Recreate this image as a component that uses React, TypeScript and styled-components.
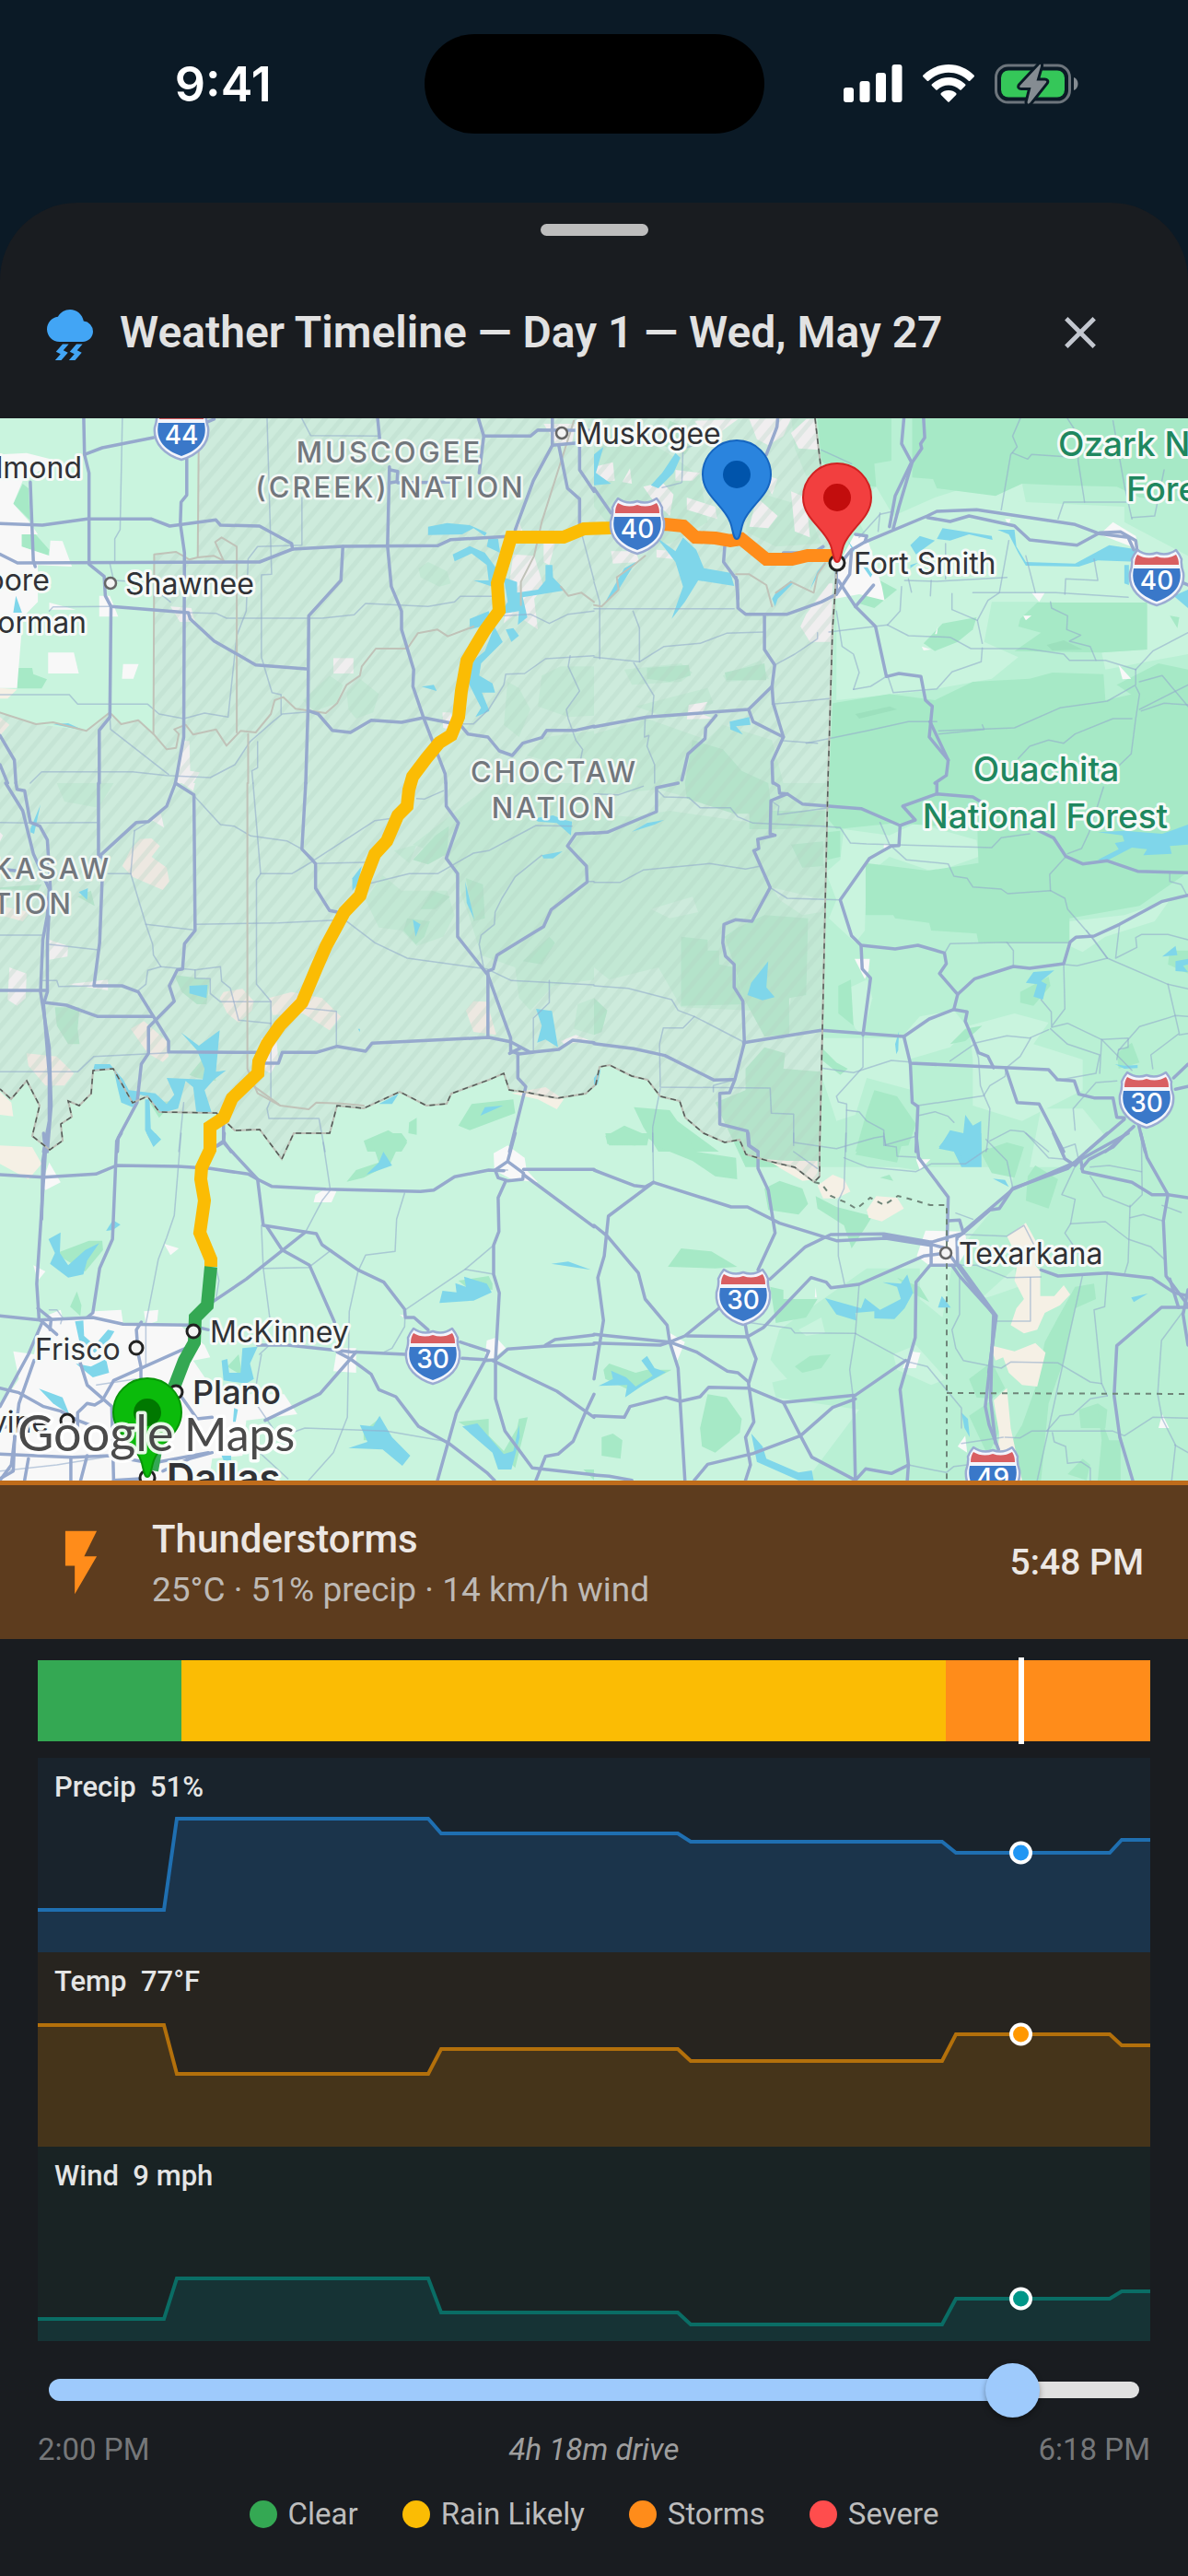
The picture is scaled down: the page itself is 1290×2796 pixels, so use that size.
import React, { useState } from "react";
import styled, { createGlobalStyle } from "styled-components";
import { MdThunderstorm, MdClose, MdFlashOn } from "react-icons/md";

const GlobalStyle = createGlobalStyle`
  * { box-sizing: border-box; }
  body { margin: 0; background: #191c20; }
`;

const Page = styled.div`
  min-height: 100vh;
  background: #0b1a26;
  font-family: Roboto, "Liberation Sans", sans-serif;
  display: flex;
  flex-direction: column;
`;

/* ---------- status bar ---------- */
const StatusBar = styled.header`
  display: grid;
  grid-template-columns: 1fr 369px 1fr;
  align-items: center;
  padding: 37px 0 75px;
`;
const Clock = styled.time`
  font: 600 52px/60px Inter, sans-serif;
  color: #fff;
  text-align: center;
  padding: 2px 0 0 24px;
`;
const Island = styled.div`
  height: 108px;
  border-radius: 54px;
  background: #000;
`;
const StatusIcons = styled.div`
  display: flex;
  justify-content: center;
  align-items: center;
  gap: 22px;
  padding-right: 31px;
  svg { display: block; }
`;

/* ---------- sheet ---------- */
const Sheet = styled.main`
  flex: 1;
  background: #191c20;
  border-radius: 84px 84px 0 0;
  display: flex;
  flex-direction: column;
`;
const Handle = styled.div`
  width: 117px;
  height: 13px;
  border-radius: 7px;
  background: #bdbdbd;
  margin: 23px auto 12px;
`;
const TitleRow = styled.div`
  display: flex;
  align-items: center;
  height: 186px;
  padding: 0 88px 0 46px;
  gap: 24px;
`;
const Title = styled.h1`
  flex: 1;
  margin: 0;
  font-size: 48px;
  line-height: 60px;
  font-weight: 600;
  color: #e2e2e2;
  white-space: nowrap;
`;
const CloseButton = styled.button`
  display: flex;
  padding: 0;
  border: 0;
  background: none;
  color: #c3c7cf;
  cursor: pointer;
`;
const MapSvg = styled.svg`
  display: block;
  width: 100%;
  height: auto;
  background: #c9f4de;
  font-family: Inter, "Liberation Sans", sans-serif;
`;

const Banner = styled.section`
  display: flex;
  align-items: center;
  gap: 36px;
  height: 172px;
  padding: 0 48px 0 47px;
  background: #5d3c1e;
  border-top: 5px solid #bf6c1b;
`;
const BannerText = styled.div`
  flex: 1;
`;
const Condition = styled.h2`
  margin: 0;
  font-size: 42px;
  line-height: 60px;
  font-weight: 500;
  color: #ece7e3;
`;
const Details = styled.p`
  margin: 0;
  font-size: 37px;
  line-height: 50px;
  color: #bdb9b5;
`;
const BannerTime = styled.time`
  font-size: 39px;
  line-height: 50px;
  font-weight: 500;
  color: #ece7e3;
`;

/* ---------- timeline ---------- */
const Timeline = styled.section`
  padding: 23px 41px 47px;
  display: flex;
  flex-direction: column;
`;
const Strip = styled.div`
  position: relative;
  display: flex;
  height: 88px;
  margin-bottom: 18px;
`;
const Segment = styled.div<{ $grow: number; $color: string }>`
  flex: ${(p) => p.$grow} 1 0;
  background: ${(p) => p.$color};
`;
const Cursor = styled.div`
  position: absolute;
  top: -3px;
  bottom: -3px;
  width: 6px;
  margin-left: -3px;
  background: #fff;
`;
const Lane = styled.div<{ $bg: string }>`
  position: relative;
  background: ${(p) => p.$bg};
  svg { display: block; width: 100%; height: auto; }
`;
const LaneLabel = styled.div`
  position: absolute;
  left: 18px;
  top: 12px;
  font-size: 31px;
  line-height: 40px;
  font-weight: 500;
  color: #e4e5e5;
  white-space: pre;
`;
const SliderBox = styled.label`
  position: relative;
  display: flex;
  align-items: center;
  height: 90px;
  margin-top: 8px;
  padding: 0 12px;
`;
const Played = styled.span`
  height: 24px;
  border-radius: 12px 0 0 12px;
  background: #9ecafc;
`;
const Remaining = styled.span`
  flex: 1;
  height: 18px;
  border-radius: 0 9px 9px 0;
  background: #e0e0e0;
`;
const Range = styled.input`
  position: absolute;
  left: -18px;
  width: calc(100% + 36px);
  height: 60px;
  margin: 0;
  appearance: none;
  background: transparent;
  cursor: pointer;
  &::-webkit-slider-thumb {
    appearance: none;
    width: 59px;
    height: 59px;
    border-radius: 50%;
    background: #9ecafc;
    box-shadow: 0 3px 6px rgba(0, 0, 0, 0.35);
  }
`;
const Times = styled.div`
  display: flex;
  justify-content: space-between;
  font-size: 33px;
  line-height: 40px;
  color: #757779;
  em { color: #9e9e9e; }
`;
const Legend = styled.ul`
  display: flex;
  justify-content: center;
  gap: 48px;
  margin: 30px 0 0;
  padding: 0;
  list-style: none;
  font-size: 33px;
  line-height: 40px;
  color: #bdbdbd;
`;
const LegendItem = styled.li`
  display: flex;
  align-items: center;
  gap: 12px;
`;
const Dot = styled.span<{ $color: string }>`
  width: 30px;
  height: 30px;
  border-radius: 50%;
  background: ${(p) => p.$color};
`;

/* ---------- map data: six tiles, each 1568 x 1200 units over 645 x 400 ---------- */
type Tile = {
  x: number; y: number;
  mid?: string[]; dark?: string[]; light?: string[]; deep?: string[]; sand?: string[]; town?: string[];
  water?: string[]; minor?: string[]; major?: string[]; tan?: string[];
};

const tiles: Tile[] = [
  {
    x: 0, y: 450,
    dark: ["45,825 85,825 88,845 124,862 110,892 45,892", "57,390 90,385 130,440 128,458 57,430", "35,290 60,225 75,240 80,345"],
    mid: ["800,930 870,850 905,880 890,940 830,965", "915,905 950,860 1000,910 985,970 940,990 920,960", "1105,500 1130,480 1180,510 1190,550 1160,560 1110,530", "1340,870 1370,890 1400,960 1370,1050 1330,1010", "1430,850 1480,820 1568,820 1568,980 1500,985 1420,950", "1390,1110 1440,1050 1568,1030 1568,1150 1450,1130", "925,180 990,150 1020,180 960,205"],
    town: ["0,130 70,125 150,150 60,215 35,290 75,345 100,390 57,390 57,430 130,460 133,410 165,412 190,495 100,490 100,610 60,660 45,890 0,890", "127,775 195,775 208,843 127,843", "325,812 366,812 352,860 322,860", "880,793 933,793 933,843 880,843", "262,590 290,590 312,658 262,658", "450,625 505,630 515,675 475,675", "1355,455 1410,460 1435,560 1410,600 1420,700 1360,650 1330,680", "1435,30 1520,30 1510,90 1470,100", "1435,420 1465,420 1450,490 1435,480", "1168,970 1190,970 1200,1030 1170,1020", "480,1063 500,1063 502,1160 527,1165 510,1200 460,1200", "1370,350 1380,380 1365,380", "130,612 200,635 130,635"],
    sand: ["0,890 45,895 20,925 0,925", "0,985 25,1010 0,1045"],
    water: ["1130,365 1180,353 1240,360 1285,385 1280,395 1250,370 1220,390 1130,392", "1195,455 1240,428 1280,450 1310,500 1300,560 1250,540 1290,540 1285,490 1245,452 1200,478", "1290,400 1315,405 1320,450 1285,430", "1330,530 1365,545 1365,580 1420,570 1440,540 1440,490 1458,490 1460,530 1492,572 1380,595 1392,660 1367,685 1370,640 1320,650 1340,610", "1240,665 1290,640 1300,680 1240,700", "1335,700 1355,695 1370,720 1350,740", "1305,690 1327,740 1270,810 1265,850 1300,875 1307,905 1272,905 1292,965 1255,985 1270,955 1235,870 1250,800 1280,770", "1113,886 1145,880 1153,900", "42,590 58,645 35,645", "140,1008 180,1005 225,1030"],
    tan: ["525,13 522,465 500,472 465,447 407,455 405,1040 440,1090 465,1085 472,1040 460,1025 490,1010 510,1042 570,1025 598,1078 635,1030 675,1035 715,975 725,930 748,920 780,958 860,972 890,940 915,880 950,850 955,820 992,762 1075,762 1103,712 1155,700 1182,722 1250,690", "590,475 568,415 585,400 625,430 625,1035", "522,465 565,460 590,475", "0,970 95,1008 140,1002 228,1030 290,970 320,1008 365,995 405,1040", "655,1040 655,1200", "1515,20 1430,350 1410,460 1375,545 1375,620", "1480,560 1500,590 1535,580 1568,610"],
    minor: ["323,13 317,375 303,405 303,480", "705,13 717,520 690,522 690,790 718,905 742,912 742,975", "797,13 820,68 1000,70", "797,270 797,425 680,430 655,470 650,640 625,720 602,985 540,972 485,990 420,975 390,943 205,943 183,912 0,912", "130,640 140,626 290,625", "500,645 570,647 598,663 850,663 935,652 965,615 1130,625 1200,610 1215,592 1300,592", "1568,640 1500,650 1450,680 1400,650 1330,655", "1568,785 1440,795 1385,843 1335,845 1330,880 1290,960 1250,1007 1200,1007", "1505,785 1500,820 1530,900 1495,960 1500,990 1520,1060 1538,1090 1530,1140", "290,985 292,1025 445,1172", "80,1200 110,1163 350,1163 440,1175 555,1182 620,1140 660,1065 720,1000 745,975 815,968", "290,485 300,540 345,543", "450,610 420,580", "1537,395 1568,540", "680,1065 680,1150 665,1160 668,1200"],
    major: ["221,13 223,130 235,190 235,487 275,527 278,590 293,625 290,985 262,1028 262,1200", "223,130 270,108 405,75", "545,25 565,15", "80,220 88,475 93,495", "0,355 112,360 230,340 400,340 448,363 570,343 582,360 685,363 770,420 772,438 685,480 46,483 0,455", "772,438 905,429 1155,427 1190,407 1340,397", "493,145 493,262 478,285 476,355 487,450 485,1050 463,1200", "293,625 497,645 502,665 565,737 675,815 808,828", "905,430 900,540 815,655 813,960 807,1200", "815,965 840,975 877,1028 925,1035 980,995 1060,1002 1118,987 1215,1010 1235,1040 1288,1050 1318,1095 1352,1110 1380,1070 1430,1052 1443,1028 1520,1028 1568,1015", "997,13 1003,90", "1028,170 1023,428 1033,560 1060,640 1060,700 1092,830 1090,885 1118,987 1175,1170 1177,1200", "1263,13 1277,70 1265,190", "1277,70 1400,70 1420,50 1568,52", "1458,13 1458,100 1408,215 1360,375", "1475,100 1498,240 1530,275 1530,360", "1530,60 1530,180 1568,250", "1458,100 1525,92", "0,1045 38,1125 42,1200", "0,1140 20,1200", "1030,180 1050,185 1048,218 1030,222", "1050,222 1190,220"],
  },
  {
    x: 645, y: 450,
    mid: ["583,13 1568,13 1568,1200 618,1200 640,480", "0,60 80,40 200,130 280,200 300,350 200,420 80,420 0,300", "420,250 560,300 600,420 480,430 400,380", "80,830 230,810 260,840 230,870 100,880", "340,850 440,800 462,860 350,870", "110,950 300,890 315,940 200,990", "0,1040 140,990 300,1060 300,1200 0,1200", "520,0 583,20 600,190 560,200 530,110", "340,1010 470,1060 500,1200 320,1200 280,1080"],
    light: ["745,235 790,330 900,270 1000,230 1130,225 1140,285 1400,300 1400,350 1568,460 1568,780 1350,830 1340,775 1460,765 1460,620 1170,610 1050,610 1030,740 1120,790 1050,860 870,900 640,930 640,480 720,400 680,300", "1065,270 1130,240 1130,285"],
    dark: ["590,13 785,13 785,150 740,160 745,235 680,230 600,150", "840,13 1568,13 1568,285 1440,270 1380,235 1230,230 1130,225 1060,265 905,240 895,210 840,205", "1170,612 1460,612 1460,765 1340,775 1110,770 1180,710 1120,690 1125,665", "630,940 780,910 900,930 1000,870 1150,860 1210,840 1345,845 1350,930 1568,870 1568,1200 620,1200", "870,745 920,680 1010,660 1000,700 960,740 900,770", "740,530 800,570 740,630 700,615", "1380,880 1490,810 1568,830 1568,900 1440,930", "1520,655 1545,660 1540,695", "200,20 280,60 240,130 180,100", "140,825 250,815 255,850 200,870 140,860", "345,840 450,810 455,865 350,865", "260,1060 340,1090 390,1160 460,1200 240,1200"],
    deep: ["1195,750 1240,735 1290,765 1210,768", "690,975 780,950 800,960 700,990"],
    town: ["410,15 520,13 500,70 460,100 430,80", "520,60 560,15 583,15 595,115 540,110", "0,170 50,155 55,215 5,220", "75,220 95,175 100,225", "130,235 180,220 210,260 200,330 150,270", "245,270 320,300 325,340 245,310", "430,270 485,330 460,370 410,365", "520,250 560,270 570,400 530,380", "45,445 110,445 120,480 50,485", "165,440 215,445 210,470 165,465", "690,385 720,395 760,560 767,605 700,585 635,600 640,500", "560,650 620,550 630,550 625,740 570,740 545,690", "250,945 300,935 285,975 315,990 245,992", "1335,390 1370,350 1430,395 1440,440", "1155,580 1190,580 1175,610", "1385,815 1418,860 1395,862", "1133,655 1155,655 1140,670", "1085,340 1100,340 1095,360", "265,20 380,15 330,60 280,45", "215,180 280,190 260,215 215,215", "435,190 485,210 470,260", "865,755 890,765 870,768", "900,715 908,690 905,715"],
    water: ["0,130 25,105 5,190 45,225 0,230", "150,230 180,190 215,125 228,140 210,190 170,240", "165,400 215,445 235,400 270,440 290,500 360,515 370,558 275,540 240,610 205,665 235,560 215,480", "480,580 520,540 525,550 485,600 478,625 470,600", "570,570 610,480 590,510", "30,610 80,500 110,480 60,580", "835,425 860,395 900,410 850,455", "905,405 920,370 1050,395 1052,408 990,390 940,410", "1065,375 1110,375 1115,430 1140,480 1270,485 1360,425 1440,440 1450,480 1330,475 1280,495 1140,492 1120,450 1095,390", "1400,490 1412,490 1412,555 1400,550", "1530,590 1568,570 1568,630", "358,1000 410,985 413,1010 375,1015 393,1042 360,1025", "835,490 855,482 835,500", "670,410 700,460 735,520 730,530 690,460"],
    tan: ["0,620 20,625 65,570 60,530 100,495 135,460", "375,520 410,520 455,555 470,625", "480,580 520,545 580,580 590,520 610,485"],
    minor: ["0,545 15,610 15,795", "0,632 370,632", "103,640 120,695 120,805 0,790", "120,805 185,755 280,745 350,712 450,708", "105,808 158,915 153,985", "135,990 133,1050 145,1045 140,1080 160,1140 160,1200", "478,815 530,780 590,730 590,710", "470,943 540,935 620,925", "620,708 775,685 830,720 940,725 995,762 1140,762 1240,780 1255,800 1350,800 1430,830", "640,640 655,755 685,780 700,840 685,895", "685,895 730,885 775,850 790,905 905,893 945,838 1022,805 1025,760", "775,685 808,640 812,560", "1000,580 1220,580 1410,595", "945,583 945,635 1012,670 1025,745", "1012,670 1040,605 1070,580 1095,410", "830,535 838,578", "890,540 888,590", "928,420 928,535", "820,540 905,543 1090,530", "1125,13 1105,70 1117,105 1100,130 1075,310", "1105,125 1145,145 1155,130 1255,138", "1250,13 1280,70 1278,150 1295,285", "1370,20 1400,230 1420,340", "1505,180 1480,330 1420,335", "1205,610 1208,630 1250,655 1248,700 1285,718 1255,738 1310,755 1325,800", "1243,585 1245,535 1330,540 1320,470", "1430,830 1475,770 1568,710", "1430,830 1430,880 1355,933 1230,955 1110,1020 910,1030", "1430,885 1440,910 1430,990 1418,1105 1380,1150", "1440,960 1568,880", "560,1070 720,1030 830,1000 905,1000", "910,1040 1030,1025 1025,1010", "500,1062 590,1070", "600,115 680,160", "755,320 750,380", "700,400 755,325 790,315", "1568,945 1505,940 1445,965", "1120,1120 1150,1080 1200,1060 1240,1070 1270,1040 1370,990 1420,990", "1225,340 1240,285 1410,285", "1440,870 1500,850 1568,950", "1140,460 1165,580", "232,220 235,110 265,100 290,60", "180,238 230,222"],
    major: ["0,240 45,320", "345,430 342,480 378,540 380,630 400,650 510,650 600,610 640,585", "375,530 380,600", "450,655 450,765 477,815 470,885 473,940 500,1050 470,1130 472,1200", "470,885 408,960 140,985 0,1017", "408,960 420,1000 500,1050", "322,980 295,1020 293,1055 248,1105 232,1190", "485,13 483,40 455,130", "870,13 873,75 862,95 865,110 840,155 805,300 790,370", "818,13 812,95 838,155 795,265 780,365", "640,580 640,500 680,440 715,415 880,330 905,315 1010,310 1270,358 1335,388 1410,400 1425,440", "880,335 940,348 990,330 1110,362 1150,408 1275,425 1335,385 1390,382 1430,410 1435,450", "715,415 720,395 690,390", "640,585 675,520 680,440", "645,540 690,625 743,690 772,853 805,843 863,853 875,930 893,950 885,1050 935,1125 930,1175 900,1200", "690,625 738,555", "887,1000 935,1125", "605,430 580,450 500,450", "1555,548 1568,555"],
  },
  {
    x: 0, y: 850,
    mid: ["1090,200 1300,0 1568,0 1568,640 1460,660 1400,740 1370,700 1360,600 1270,560 1240,440 1200,300 1180,240", "965,380 1010,300 1060,350 1180,350 1200,430 1170,500 1100,530 1060,480 1000,470", "1525,720 1568,700 1568,820 1515,800", "150,0 300,0 260,80 170,60", "1040,220 1100,200 1080,260"],
    dark: ["1090,250 1150,170 1185,140 1180,230 1130,265", "1110,410 1140,350 1188,370 1150,410", "1065,480 1075,440 1135,450 1120,500 1098,525", "1230,310 1275,330 1280,440 1250,450", "1380,580 1450,500 1465,520 1430,590", "460,625 555,640 545,720 520,720 480,680", "145,730 210,730 205,800 210,850 180,850 150,790", "1210,1115 1245,1045 1355,1030 1360,1075 1240,1130", "960,1165 1025,1130 1075,1170 1060,1200 970,1200", "1080,1105 1100,1090 1100,1145 1078,1140", "395,1040 460,1035 420,1090", "500,950 560,860 570,970 520,960", "0,340 110,330 100,350 0,345", "205,370 240,350 250,400"],
    town: ["130,510 180,530 178,565 130,575", "25,600 70,620 68,700 45,725 20,705", "180,655 285,640 285,675", "690,830 730,840 735,900 715,945 690,930", "480,0 515,0 510,25", "400,120 425,100 433,145", "1480,840 1520,820 1560,840 1490,850", "0,160 8,170 0,190"],
    sand: ["345,215 370,182 400,180 422,205 400,240 440,275 447,320 430,348 350,305 323,270", "590,680 640,670 670,710 665,740 630,780 600,750 580,700", "710,700 770,680 850,700 900,760 870,805 800,750 720,755", "1230,740 1250,710 1285,712 1310,820 1250,810", "345,800 380,775 440,840 445,890 430,908 390,880", "70,880 150,890 195,945 170,985 120,985 75,920", "0,1005 30,1040 35,1085 0,1080", "1350,1010 1440,990 1488,1030 1470,1062 1420,1030", "0,400 80,420 60,450 0,430"],
    water: ["478,812 525,855 580,805 570,940 597,935 565,965 540,1000 560,1078 518,1070 510,990 490,970 470,1060 425,1075 410,1050 390,1020 370,1015 350,1055 320,1040 310,990 300,930 245,940 250,915 290,915 325,965 340,1000 410,1010 440,1045 460,1015 440,960 535,965 540,930 520,870", "383,1030 395,1030 398,1125 425,1160 405,1185 383,1130", "500,660 548,657 545,700 500,685", "208,355 232,342 230,380", "1415,735 1457,742 1473,860 1440,835 1418,845 1430,790", "1090,445 1110,460 1097,500", "1228,320 1238,370 1252,445 1232,390", "930,310 955,270 945,330 930,350", "80,150 107,70 90,165 80,160", "1410,115 1460,105 1490,120 1510,125 1507,170 1470,130 1420,125", "1430,235 1485,222 1460,245 1435,245", "1268,1083 1280,1055 1328,1050", "1000,1045 1053,1010 1035,1045", "945,800 950,800 950,810"],
    tan: ["653,0 653,930 680,1010 740,1050 815,1062 835,1040 900,1043 960,1050", "668,985 735,1045"],
    minor: ["0,128 75,130 255,128", "355,155 345,295 385,460 403,525 405,560 425,598 515,608 582,598 585,645 608,668 630,772 715,782", "355,155 400,120", "425,598 390,610 385,655 365,675", "515,608 515,635 555,637 555,685 582,712 715,712", "515,45 582,135 618,140 662,172 757,188 797,215 830,250 990,122 1035,115", "668,0 688,295 770,295 825,255", "688,295 677,315 677,655 715,710 715,1030 705,1060 710,1092 842,1092 858,1200", "830,262 965,258", "515,460 735,455 885,446", "385,460 510,478", "910,445 990,520 1075,570 1285,605 1350,643 1568,657", "975,327 1080,295 1155,295 1250,228 1290,220 1415,138 1510,140", "1430,235 1360,305 1325,375 1307,420 1305,460 1270,495 1265,525 1278,610", "1450,643 1450,715 1408,765 1408,870", "805,733 888,743 888,855", "0,495 110,495", "130,525 260,543", "110,643 150,643 155,662 250,660", "285,295 345,295", "0,940 205,940 248,890 445,878", "485,1040 472,1200", "1100,50 1120,52 1170,25", "1550,320 1568,320"],
    major: ["260,0 260,235 272,245 263,520 248,660 322,660 365,680 445,840 445,875 680,877", "265,235 360,128 392,125 440,75 463,0 512,38 515,480 487,523 482,605 468,608 447,660 460,710 392,795 392,880 373,915 362,1040 312,1155 310,1200", "15,0 60,90 88,230 130,345 125,430 113,510 107,680 130,860 135,1050 125,1200", "42,0 45,20 65,25 80,128 105,140 125,185 133,345 125,520 125,680 115,720 130,950 130,1100 115,1200", "0,675 125,675", "120,715 175,723 258,760 405,760", "680,912 735,912 745,877 835,877 890,857 965,873 982,847 1290,828 1348,842 1400,877 1475,867 1512,837 1568,845", "807,0 797,215 833,262 833,342 870,415 890,420", "1177,0 1178,75 1210,130 1178,245 1208,295 1208,500 1288,625 1348,830 1348,872 1370,882 1405,877", "1288,825 1288,612 1302,605 1312,560 1435,467 1455,412 1550,322 1548,270 1498,205 1520,165 1568,162", "1367,880 1367,960 1388,988 1345,1200", "590,1100 590,1165 573,1180", "590,1165 610,1200", "0,280 40,285", "1345,880 1375,862"],
  },
  {
    x: 645, y: 850,
    mid: ["618,0 1568,0 1568,1250 595,1250", "0,0 618,0 603,800 500,830 520,700 410,740 230,730 170,600 40,640 0,600", "0,700 35,740 20,810 0,820"],
    dark: ["620,0 1568,0 1568,290 1440,400 1255,440 1255,520 1015,520 1010,490 890,480 885,455 795,440 790,430 717,430 717,260 880,285 1015,260 1012,150 800,130 640,150 620,120", "615,160 650,155 650,240 615,250", "230,500 300,510 300,545 330,545 330,590 370,600 400,720 230,725", "380,470 450,430 565,440 560,690 515,700 515,820 450,825 395,700 370,590 345,500", "400,930 450,860 505,880 500,930 600,940 595,1250 400,1250 320,1040 400,1000", "645,660 678,640 685,790 645,750", "600,860 640,910 670,930 650,950 600,900", "1125,680 1200,630 1205,660 1160,725 1125,715", "720,1070 740,1000 800,1020 850,1110 830,1180 690,1200", "240,0 460,0 470,100 370,100 270,60 245,50", "410,90 610,90 608,140 500,150 410,150", "520,200 605,190 605,270 550,275", "105,1055 200,1065 220,1100 330,1200 170,1200 130,1120", "30,1150 80,1115 145,1150 140,1180 40,1180", "1520,545 1568,545 1568,620 1515,590", "940,850 980,800 1025,790 980,840", "1380,880 1420,845 1440,910 1385,930", "0,700 35,740 20,810 0,820"],
    light: ["660,150 780,170 850,130 1010,185 1015,240 900,290 780,240 720,300 716,430 715,480 690,520 620,440 640,380 612,290 650,250", "600,830 720,830 810,830 860,760 950,740 990,800 940,860 830,900 840,1000 720,960 690,1080 640,1100 600,950", "650,680 720,640 735,700 710,820 690,800", "470,340 610,380 600,420 550,430 490,380", "150,410 260,370 275,420 200,440", "1255,450 1400,430 1520,380 1480,450 1350,500 1290,550 1255,530", "990,790 1110,750 1200,780 1160,850 1290,900 1290,1000 1130,1100 1000,1050 1000,900", "170,20 410,100 420,130 200,90 100,110 0,100 0,40", "170,790 340,780 390,850 330,950 180,900", "1180,1060 1290,1060 1350,1150 1250,1250 1150,1250"],
    town: ["688,572 728,572 725,610 715,638", "765,197 785,205 765,222"],
    water: ["460,580 455,665 477,697 445,707 405,690 415,650", "100,158 140,130 185,120 160,135", "1330,250 1385,215 1375,195 1400,190 1395,170 1330,160 1400,155 1500,165 1568,135 1568,200 1520,205 1525,230 1450,235 1460,215 1420,210 1350,255", "1500,565 1535,530 1540,560", "1535,580 1568,572 1568,590 1555,595 1568,615 1535,612", "1140,650 1160,615 1215,610 1180,645 1195,655 1185,705 1160,695 1170,655", "795,850 805,808 803,870 798,883", "1375,915 1400,920 1435,918 1435,928 1400,930", "910,1190 940,1130 975,1140 980,1080 1000,1115 1022,1100 1023,1250 970,1250 950,1200", "0,960 18,930 10,980 0,990"],
    minor: ["0,323 70,323 130,283 305,262 400,280 440,270", "0,35 65,38 130,10", "165,20 185,45 250,47 280,80 360,80 380,110 420,130 600,140 650,145 677,195 720,198 1050,210 1075,178 1150,165", "470,60 488,75 485,103 545,93 620,80", "465,340 510,375 650,380", "755,128 780,200 825,250 935,263 950,303 985,310 1000,338 1075,345 1092,360 1205,350 1243,375 1250,410 1320,510 1355,570 1515,655 1568,670", "1245,240 1203,297 1205,350", "1250,230 1287,213 1307,160 1345,13", "925,555 940,523 1090,518 1107,545 1107,597", "1090,520 1255,520", "1240,590 1275,595 1355,570", "1240,590 1243,735 1208,792 1207,745 1180,705", "1355,570 1300,480", "1387,465 1377,570 1433,535 1430,503 1445,493 1515,493 1568,510", "1515,655 1545,815 1470,885 1475,930", "1205,800 1250,850 1335,885 1325,945 1220,968", "1208,795 1250,782 1340,835 1410,830 1410,860 1385,867 1380,900", "1335,945 1340,835 1420,935", "1385,870 1440,793 1535,757 1568,760", "940,905 1010,845 1090,823 1150,830 1200,803", "1153,830 1125,890 1090,925", "1003,850 1015,895 1020,985 1030,1018 1045,1060 1040,1160 1035,1200", "1030,1015 1045,985 1085,955 1088,935", "0,660 90,668 205,705 222,740 265,760 395,843", "265,760 235,797 183,797 173,850 175,990 465,993 468,1075 527,1078 527,1180", "175,995 155,1120 155,1200", "600,928 685,943 785,903 835,908", "710,825 710,925 640,1020 645,1038 667,1045 665,1200", "855,1050 1030,1018", "855,1083 900,1070 935,1085 950,1105", "667,1065 700,1070 720,1100 765,1130 765,1180 850,1150", "315,1005 315,985 370,965", "1520,290 1520,320 1550,330 1565,365", "1568,815 1545,820", "1270,1130 1265,1060 1325,975 1380,970", "1045,1165 1100,1130 1135,1135 1200,1200"],
    major: ["222,0 165,15 165,93 35,160 0,163", "475,0 488,10 490,33 510,35 550,68 705,83 808,138 848,120 815,75 905,35 1000,45 1020,60", "905,0 905,35", "510,35 467,57 465,165 478,170 432,183 435,213 422,220 465,340 417,450 373,445 343,460 340,520 347,563 370,590 370,665 393,710 397,845 372,965 358,1008 332,1010 332,1110 405,1133 408,1180 432,1200", "808,138 805,203 785,205 727,245 650,380 680,497 705,528 795,540 855,528 925,553 930,588 912,620 960,688 950,737 885,768 818,825 600,805 395,845", "705,528 708,605 730,635 710,820", "960,688 1005,637 1107,597 1150,603 1240,588 1257,517 1272,502 1320,498 1387,460 1500,385 1568,365", "950,737 985,745 980,775 1015,878 1040,890 1055,927", "818,825 835,912 1200,933 1223,965 1268,970 1280,1013 1320,1025 1370,1025 1380,1088 1400,1090", "835,912 840,1040 855,1053 850,1200", "1088,933 1117,1040 1175,1045 1240,1200", "1165,150 1213,178 1245,238 1290,263 1355,253 1435,287 1568,292", "0,848 105,865 187,887 317,967 370,965", "1535,997 1568,988", "1530,960 1568,915", "1400,1095 1300,1200", "1425,1118 1370,1180 1350,1200", "1437,1110 1455,1200"],
  },
  {
    x: 0, y: 1230,
    dark: ["150,390 235,350 270,350 272,380 225,450 170,410", "185,565 203,515 215,560 212,595", "980,20 1010,0 1060,0 1075,25 1045,60 1030,100 960,145 915,158 940,120 1000,95", "960,970 1000,930 1010,1000 960,1000", "1210,940 1290,930 1290,985 1330,1035 1365,960 1370,930 1393,925 1360,1090 1290,1000", "1210,480 1290,465 1300,490 1300,510 1230,500", "600,760 630,720 640,790", "1540,1095 1568,1095 1568,1130"],
    sand: ["0,40 85,45 110,100 75,150 0,100"],
    town: ["1303,65 1340,40 1385,80 1390,120 1420,160 1350,150 1305,120", "833,200 860,180 888,190 875,225 828,225", "110,165 130,95 160,160 120,185", "433,360 472,375 450,397", "88,430 120,450 100,480", "380,580 418,575 415,612 385,625", "130,590 160,575 165,600 225,605 250,580 320,575 325,620 470,620 540,690 555,730 510,740 560,830 640,850 750,850 785,915 650,935 640,1050 560,1060 550,1140 0,1140 0,890 50,800 35,710 90,720 110,620", "890,700 940,700 940,780 880,775", "1285,675 1310,665 1335,700 1300,735 1280,730", "1055,590 1075,595 1070,605"],
    water: ["128,345 160,323 158,390 180,430 225,380 262,358 230,415 220,460 180,470 132,425 145,390", "280,318 298,283 318,298 298,315", "967,135 1000,95 1012,60 1035,105", "387,0 410,0 425,20 405,42", "1160,553 1168,513 1205,518 1202,488 1230,500 1225,467 1285,490 1298,518 1250,545", "1455,425 1500,418 1560,445 1480,430", "198,613 220,610 222,660 250,690 285,640 302,645 290,670 250,715 210,680", "200,750 240,760 280,735 288,780 245,795", "103,832 165,860 183,915 140,880", "585,740 600,735 605,780 635,780 640,700 680,695 660,750 670,800 650,815 590,805", "618,895 628,900 622,940 615,940", "950,950 985,955 1002,920 1035,990 1083,1050 1062,1083 1010,1030 920,1025 970,1005", "1220,955 1260,945 1330,1045 1355,1035 1370,950 1372,990 1350,1095 1315,1095 1300,1040", "585,1050 610,1050 610,1065 590,1065"],
    minor: ["478,0 460,268 440,340 418,410 385,620 385,760", "853,30 872,185 850,220 805,325", "1068,195 1047,280 1043,385 965,397 945,450 922,580 917,925 880,1040 815,1130", "690,300 695,440 712,600", "695,440 815,437 875,380", "1300,368 1228,443 1070,575 1068,630 1035,700 1015,712", "1228,443 1300,458", "570,440 578,480 570,540", "770,975 805,960 1020,970 1185,1005", "255,820 360,800", "130,575 150,575 165,600 160,620", "0,1100 150,1080 300,1050", "685,720 720,680", "690,720 680,790 670,870 720,960", "650,1000 760,1125", "1340,120 1300,120"],
    major: ["115,0 120,60 97,490 103,605", "125,0 113,90 110,280", "0,135 115,143 253,133 308,105 470,108 555,115 655,133 680,150 717,173 860,182 1110,190 1145,185 1200,142 1290,120 1330,122", "320,0 308,25 297,345 263,440 245,585 230,600", "592,0 590,30 680,150 695,300 835,327 850,363 945,445 1013,485 1068,573 1070,600 1093,600 1130,640", "590,30 573,42", "803,325 650,475 560,550", "705,305 745,380 817,430 883,615", "1360,0 1340,92 1307,120 1315,145 1340,155 1380,150 1382,130 1340,92", "1382,118 1568,118", "1382,135 1568,305", "1335,155 1315,210 1317,320 1303,365 1303,460 1318,520 1308,740", "0,595 105,608 245,600 325,622 500,625 550,640", "680,690 760,690 925,712 1070,720", "1215,680 1290,710 1280,740 1308,738 1340,703 1445,693 1568,687", "1220,733 1280,737", "1440,690 1465,672 1568,657", "1280,740 1205,910 1155,1130", "1300,740 1470,840 1568,925", "1308,740 1308,865 1333,970 1405,1090 1568,1112", "925,735 845,848 700,935", "925,735 980,785 1000,835 1045,858 1105,955 1185,1010 1285,1105 1305,1130", "940,712 925,735 890,712", "1568,850 1545,910 1513,1003 1473,1045 1440,1052 1415,1130", "103,605 150,655", "110,620 75,720 0,890", "90,740 50,880 30,1080 0,1130", "205,720 230,820 295,890 300,1130", "373,615 360,640 365,720 372,760 372,820", "490,700 300,805 270,870 250,885 230,880 205,910 205,960", "0,830 50,845 115,890 160,905 205,935 290,975", "0,1045 190,1055 290,1050 400,1075 550,1040", "187,1055 187,1130", "230,1050 213,1130", "75,1060 65,1130", "300,1130 370,1125", "480,860 520,930 560,925", "430,1100 500,1060 560,1040", "0,960 40,950 35,1100 0,1125", "100,570 135,605 132,640"],
  },
  {
    x: 645, y: 1230,
    mid: ["1130,0 1568,0 1568,1130 560,1130 700,900 480,860 460,760 490,640 720,440 860,440 860,540 920,600 950,400 1100,180", "610,0 900,0 920,100 850,120 700,90"],
    dark: ["125,0 240,0 270,60 375,80 378,150 320,140 260,90 180,50", "450,180 490,155 550,180 565,230 540,265 460,250", "585,205 640,240 735,270 715,310 680,375 660,300 590,245", "195,435 230,375 310,385 378,435 320,440", "465,500 500,510 500,540 590,540 560,600 480,618", "690,70 720,0 820,0 800,95", "1020,60 1090,30 1135,45 1110,145 1050,130", "1145,140 1165,105 1225,150 1200,245 1140,220", "1225,600 1270,500 1320,490 1325,540 1270,570 1240,740 1200,880 1180,1130 1095,1130 1085,1040 1130,950 1165,830 1190,680", "990,800 1050,745 1085,830 1050,865 1010,860", "1280,900 1330,880 1355,900 1350,960 1285,960", "280,960 300,850 350,860 390,930 385,975 320,1040 285,1020", "20,990 50,978 75,1000 70,1060 20,1050", "25,770 40,750 110,780 140,770 205,770 100,840 30,800", "530,760 570,725 625,720 600,765 550,780", "1250,1110 1290,1060 1310,1080 1300,1130", "1330,900 1360,1000 1390,1000 1390,1130 1330,1130 1340,1000", "990,920 1050,870 1070,970 1040,1050", "755,145 780,135 790,155", "30,0 120,0 110,40 35,35", "800,470 860,500 885,550 840,520"],
    light: ["540,640 600,600 610,650 560,660", "455,720 480,760 510,800 440,820", "790,720 850,690 930,800 890,820 800,770", "1020,540 1110,440 1120,500 1050,530"],
    sand: ["1090,335 1140,292 1170,360 1165,430 1178,450 1178,530 1215,530 1240,495 1257,525 1230,560 1190,585 1170,640 1135,652 1100,625 1115,570 1135,540 1110,480 1120,410", "1045,690 1110,710 1165,683 1192,715 1170,825 1130,820 1095,780 1080,730 1060,740", "1055,870 1090,830 1100,960 1130,1130 1060,1130 1070,980", "720,250 745,205 800,210 818,245 760,287 725,275", "590,170 630,135 660,150 677,190 640,212 605,212", "455,85 510,90 590,90 590,150 550,155 500,120"],
    town: ["875,317 980,320 985,380 960,430 890,435 852,400", "850,85 888,85 860,120", "200,650 240,680 220,740 205,700", "835,710 862,715 850,765 815,765", "960,1020 980,985 985,1040", "1490,960 1500,915 1518,960", "585,500 588,535 583,535"],
    water: ["762,485 810,490 827,460 842,520 820,570 793,605 740,603 740,580 690,585 692,610 640,590 610,537 705,570 715,537 755,575 810,540 800,500", "918,530 942,568 908,568", "910,45 940,0 1022,0 1023,60 975,93 960,45", "1053,148 1085,152 1095,175", "1418,535 1462,522 1425,550", "415,978 445,1020 455,1060 540,1105 575,1098 580,1130 540,1130 430,1070", "12,823 50,800 45,773 85,795 110,825 155,790 125,740 140,725 160,765 190,778 130,820 82,860 88,820", "970,910 987,930 992,990 978,960"],
    minor: ["155,0 157,160", "527,0 527,30 640,50 740,15 765,10 770,40 798,45 800,75 850,78", "665,0 660,180 645,220 645,400 662,495", "527,60 590,115", "660,80 720,110 850,125 890,100 980,100 1040,50", "765,0 770,40", "400,615 520,635 530,650 690,652 700,490", "690,652 830,745 880,760 970,895 970,960", "690,652 675,770 683,850", "965,470 965,590 945,640 955,700 975,740 1075,765 1100,745 1225,748 1310,810 1340,815 1355,855", "1152,470 1152,612 1060,612", "960,430 1010,430 1090,470 1180,468", "955,260 1000,280", "980,330 1090,335 1135,300 1160,360", "1290,460 1170,1130", "1355,455 1348,565 1320,575 1340,815", "1415,235 1410,420 1400,460", "1445,0 1447,200 1415,240 1345,205 1310,140", "1275,95 1235,200 1270,215 1258,295 1243,325 1290,410", "1258,295 1350,288 1410,345 1470,370 1505,410", "1415,275 1450,265 1500,285", "1310,110 1360,105 1445,125", "1085,990 1125,992 1155,970 1370,970 1400,985 1475,925 1568,928", "1195,970 1230,920 1265,915 1310,865 1355,855", "1210,975 1215,1005 1245,1020 1250,1075 1285,1070 1310,1090 1310,1130", "830,1080 930,1105 950,1085 985,1080", "1555,580 1498,675 1488,850 1500,930 1535,1015 1525,1130", "1533,1015 1568,1040", "1035,20 1090,90 1105,175", "1140,0 1200,80 1245,85", "1500,235 1550,258", "970,1010 1080,990", "1235,50 1270,35 1280,90"],
    major: ["407,0 410,40 433,60 433,115 460,185 478,325 433,445", "0,120 105,170 135,175 157,160 362,240 405,240 490,293 640,350 770,342 890,365", "157,160 38,270 27,400 10,470 25,610 0,800", "0,300 35,335 117,455 135,540 193,625 200,680 222,765 240,1130", "200,680 175,690 0,683", "200,680 0,655", "330,570 240,660 200,680 270,712 352,775 380,780 408,810", "245,660 405,663 447,633 573,470 613,485 625,503 700,492 870,400 930,390", "465,475 558,370 625,330 765,328 890,355 975,325", "765,335 890,362 930,375", "400,627 405,663 428,735 408,815 422,940 400,990 413,1080 400,1130", "0,920 80,925 95,890 190,860 228,873 280,858 303,827 408,830 500,877 690,853 823,740", "500,877 545,985 575,1055 690,1130", "265,1130 300,1078 420,1043 545,985 630,893 690,865", "685,855 690,1130 717,1093 785,1108 830,1080", "887,430 850,485 848,665 808,835 830,1080 827,1130", "850,0 857,80 935,208 932,350", "935,285 965,283 975,325", "890,355 890,430 960,430 958,340 975,325", "975,325 1045,250 1070,245 1105,180 1250,115 1355,0", "975,320 1030,262 1105,183 1270,95 1410,0", "1213,0 1243,83 1270,105 1285,85 1290,125 1420,160 1473,200 1515,200 1568,210", "1287,115 1307,85 1370,45 1405,0", "1443,0 1460,80 1515,200 1503,285 1510,465 1568,560", "945,430 965,465 1060,595 1033,890 1043,950 1068,1030", "930,380 1000,500 1055,590 1050,720 1047,870 1060,1010", "965,430 1062,595 1042,780", "1180,445 1225,465 1355,455 1473,472 1533,520 1568,530", "1520,475 1543,568", "1568,567 1498,567 1380,692 1373,855 1388,990 1422,1130", "1568,510 1555,590 1568,690", "0,1113 40,1117 100,1130"],
  },
];

const tileMatrix = (t: Tile) => `translate(${t.x} ${t.y}) scale(0.41135 0.33333)`;

type LayerProps = { kind: "mid" | "dark" | "light" | "deep" | "sand" | "town" | "water"; fill: string };
const FillLayer = ({ kind, fill }: LayerProps) => (
  <g fill={fill}>
    {tiles.map((t, i) => (
      <g key={i} transform={tileMatrix(t)}>
        {(t[kind] ?? []).map((p, j) => <polygon key={j} points={p} />)}
      </g>
    ))}
  </g>
);
const LineLayer = ({ kind, color, width }: { kind: "minor" | "major" | "tan"; color: string; width: number }) => (
  <g fill="none" stroke={color} strokeWidth={width} strokeLinejoin="round" strokeLinecap="round">
    {tiles.map((t, i) => (
      <g key={i} transform={tileMatrix(t)}>
        {(t[kind] ?? []).map((p, j) => <polyline key={j} points={p} vectorEffect="non-scaling-stroke" />)}
      </g>
    ))}
  </g>
);

const redRiver =
  "890,1277 884,1283 863,1267 834,1260 810,1253 803,1237 787,1240 764,1230 744,1213 738,1195 717,1190 703,1172 686,1168 662,1156 651,1158 647,1177 636,1187 605,1192 568,1185 553,1183 547,1165 531,1172 490,1187 485,1198 463,1200 434,1185 395,1203 366,1200 358,1230 319,1230 306,1258 282,1226 255,1227 235,1208 173,1207 160,1190 144,1197 123,1160 101,1162 99,1187 86,1200 74,1195 78,1212 66,1220 68,1238 54,1248 35,1233 43,1200 29,1173 12,1193 0,1182";
const nations =
  "216,454 885,454 892,513 909,610 904,683 899,850 893,1117 890,1250 " + redRiver +
  " 0,773 39,786 94,793 119,773 132,786 150,782 167,797 167,601 191,599 206,607 215,605";
const stateLine = "885,454 892,513 909,610 904,683 899,850 893,1117 890,1250 890,1277";

const yellowRoute =
  "692,571 662,573 634,574 612,583 555,583 547,610 540,633 542,663 526,685 507,717 501,750 498,778 490,798 477,806 463,823 448,843 444,857 442,875 432,885 420,913 407,927 397,953 391,972 374,990 354,1027 344,1050 328,1088 304,1113 290,1133 281,1152 280,1165 252,1192 243,1213 228,1223 228,1248 219,1267 218,1280 222,1303 217,1338 229,1367 229,1375";
const greenRoute = "229,1375 225,1417 212,1430 211,1457 200,1477 190,1503 177,1530 165,1596";
const orangeRoute = "692,571 723,569 742,571 755,583 777,584 793,587 805,585 832,607 860,607 877,603 904,603";

type LabelProps = { x: number; y: number; children: string; size?: number; weight?: number; anchor?: "start" | "middle" | "end"; color?: string };
const MapLabel = ({ x, y, children, size = 32, weight = 400, anchor = "start", color = "#303236" }: LabelProps) => (
  <text x={x} y={y} fontSize={size} fontWeight={weight} textAnchor={anchor} fill={color} stroke="#f6faf8" strokeWidth={6} strokeLinejoin="round" paintOrder="stroke">
    {children}
  </text>
);
const AreaText = styled.text`
  font-size: 31px;
  font-weight: 500;
  letter-spacing: 3px;
  fill: #72777d;
  stroke: #f2f8f5;
  stroke-width: 5px;
  stroke-linejoin: round;
  paint-order: stroke;
`;

const Town = ({ x, y, r = 6, dark = false }: { x: number; y: number; r?: number; dark?: boolean }) => (
  <circle cx={x} cy={y} r={r} fill="#f4f4f4" stroke={dark ? "#222" : "#666"} strokeWidth={dark ? 3 : 2.5} />
);

const Shield = ({ x, y, n }: { x: number; y: number; n: string }) => (
  <g transform={`translate(${x} ${y})`}>
    <path d="M-21 2 Q-11 9 0 5 Q11 9 21 2 Q25 7 27 12 Q26 18 29 27 C31 45 17 57 0 62 C-17 57 -31 45 -29 27 Q-26 18 -27 12 Q-25 7 -21 2Z" fill="#f3f5fb" stroke="#9aabd2" strokeWidth={2.5} strokeLinejoin="round" />
    <path d="M-25 22 C-29 42 -17 52 0 58 C17 52 29 42 25 22Z" fill="#3a78c9" />
    <path d="M-21 7 Q-11 13 0 9 Q11 13 21 7 Q24 11 24 18 L-24 18 Q-24 11 -21 7Z" fill="#d95f62" />
    <text x={0} y={45} fontSize={28} fontWeight={500} textAnchor="middle" fill="#fff">{n}</text>
  </g>
);

const Pin = ({ x, y, fill, edge, core }: { x: number; y: number; fill: string; edge: string; core: string }) => (
  <g transform={`translate(${x} ${y})`}>
    <path d="M0 0 C-4 0 -4 -10 -7 -18 C-14 -37 -37 -47 -37 -70 A37 37 0 0 1 37 -70 C37 -47 14 -37 7 -18 C4 -10 4 0 0 0Z" fill={fill} stroke={edge} strokeWidth={2} />
    <circle cx={0} cy={-70} r={15} fill={core} />
  </g>
);

const RouteMap = () => (
  <MapSvg viewBox="0 454 1290 1153" role="img" aria-label="Route from Dallas to Fort Smith">
    <defs>
      <pattern id="hatch" width="14" height="14" patternUnits="userSpaceOnUse" patternTransform="rotate(40)">
        <rect width="5" height="14" fill="#b5d5c6" opacity="0.3" />
      </pattern>
    </defs>
    <rect x="0" y="454" width="1290" height="1153" fill="#c9f4de" />
    <FillLayer kind="mid" fill="#b9f0d4" />
    <FillLayer kind="light" fill="#c9f4de" />
    <FillLayer kind="dark" fill="#a6e9c6" />
    <FillLayer kind="deep" fill="#9ce0bd" />
    <FillLayer kind="sand" fill="#f5f0e5" />
    <FillLayer kind="town" fill="#f8f8f8" />
    <polygon points={nations} fill="rgba(217,212,214,0.27)" />
    <polygon points={nations} fill="url(#hatch)" />
    <FillLayer kind="water" fill="#7fd6ea" />
    <LineLayer kind="minor" color="rgba(147,172,203,0.6)" width={1.5} />
    <LineLayer kind="tan" color="#c0c2b8" width={2} />
    <LineLayer kind="major" color="#96a9cd" width={3.5} />
    <g fill="none">
      <polyline points={stateLine} stroke="#b9b9b2" strokeWidth={2} />
      <polyline points={stateLine} stroke="#545c58" strokeWidth={1.5} strokeDasharray="6 5" />
      <polyline points={redRiver} stroke="#babdb4" strokeWidth={2} />
      <polyline points={redRiver} stroke="#545c58" strokeWidth={1.5} strokeDasharray="6 5" />
      <polyline points="884,1283 892,1285 902,1298 918,1305 930,1312 945,1300 960,1308 975,1298 990,1302 1010,1308 1028,1308 1028,1607" stroke="#6f8579" strokeWidth={2} strokeDasharray="6 6" />
      <polyline points="1028,1512 1290,1513" stroke="#6f8579" strokeWidth={2} strokeDasharray="6 6" />
    </g>
    <g fill="none" strokeWidth={14} strokeLinejoin="miter">
      <polyline points={orangeRoute} stroke="#ff8c1a" />
      <polyline points={yellowRoute} stroke="#fbbc04" />
      <polyline points={greenRoute} stroke="#34a853" />
    </g>

    <Town x={120} y={633} />
    <Town x={610} y={470} />
    <Town x={1027} y={1360} />
    <Town x={909} y={611} r={8} dark />
    <Town x={148} y={1463} r={7} dark />
    <Town x={210} y={1445} r={7} dark />
    <Town x={191} y={1511} r={7} dark />
    <Town x={73} y={1542} r={7} dark />
    <Town x={160} y={1604} r={8} dark />

    <MapLabel x={89} y={519} anchor="end">Edmond</MapLabel>
    <MapLabel x={54} y={641} anchor="end">Moore</MapLabel>
    <MapLabel x={94} y={687} anchor="end">Norman</MapLabel>
    <MapLabel x={136} y={645}>Shawnee</MapLabel>
    <MapLabel x={625} y={482}>Muskogee</MapLabel>
    <MapLabel x={927} y={623}>Fort Smith</MapLabel>
    <MapLabel x={1041} y={1372}>Texarkana</MapLabel>
    <MapLabel x={228} y={1457}>McKinney</MapLabel>
    <MapLabel x={38} y={1476}>Frisco</MapLabel>
    <MapLabel x={53} y={1555} anchor="end">Grapevine</MapLabel>
    <MapLabel x={209} y={1524} size={36} weight={500}>Plano</MapLabel>
    <MapLabel x={181} y={1619} size={42} weight={600}>Dallas</MapLabel>
    <MapLabel x={1149} y={495} size={37} weight={500} color="#1f875f">Ozark National</MapLabel>
    <MapLabel x={1223} y={544} size={37} weight={500} color="#1f875f">Forest</MapLabel>
    <MapLabel x={1136} y={848} size={37} weight={500} color="#1f875f" anchor="middle">Ouachita</MapLabel>
    <MapLabel x={1135} y={899} size={37} weight={500} color="#1f875f" anchor="middle">National Forest</MapLabel>
    <AreaText x={423} y={502} textAnchor="middle">MUSCOGEE</AreaText>
    <AreaText x={424} y={540} textAnchor="middle">(CREEK) NATION</AreaText>
    <AreaText x={602} y={849} textAnchor="middle">CHOCTAW</AreaText>
    <AreaText x={602} y={888} textAnchor="middle">NATION</AreaText>
    <AreaText x={121} y={954} textAnchor="end">CHICKASAW</AreaText>
    <AreaText x={80} y={992} textAnchor="end">NATION</AreaText>

    <Shield x={197} y={437} n="44" />
    <Shield x={692} y={539} n="40" />
    <Shield x={1256} y={595} n="40" />
    <Shield x={1245} y={1162} n="30" />
    <Shield x={807} y={1376} n="30" />
    <Shield x={470} y={1440} n="30" />
    <Shield x={1078} y={1569} n="49" />

    <Pin x={800} y={585} fill="#2a84de" edge="#1565c0" core="#0054ab" />
    <Pin x={909} y={610} fill="#f23f3f" edge="#d02222" core="#c20d0d" />
    <Pin x={160} y={1603} fill="#0bbb0b" edge="#079507" core="#007800" />

    <g fontFamily="Lato, sans-serif" fill="#4a4a4a" stroke="#fff" strokeOpacity={0.9} strokeWidth={7} strokeLinejoin="round" paintOrder="stroke">
      <text x={19} y={1575} fontSize={54}>Google</text>
      <text x={200} y={1575} fontSize={50}>Maps</text>
    </g>
  </MapSvg>
);

/* ---------- charts ---------- */
const xs = [0, 137, 151, 424, 438, 695, 709, 982, 997, 1164, 1177, 1208];
const lanes = [
  { name: "Precip", value: "51%", bg: "#19232c", area: "#1b344b", line: "#1f6fb1", dot: "#2196f3", levels: [165, 66, 82, 91, 103, 89] },
  { name: "Temp", value: "77°F", bg: "#27241f", area: "#45341a", line: "#b3700b", dot: "#ff9800", levels: [79, 132, 105, 118, 89, 101] },
  { name: "Wind", value: "9 mph", bg: "#192324", area: "#163335", line: "#0a6d65", dot: "#009688", levels: [187, 143, 180, 193, 165, 157] },
];
const segments = [
  { grow: 156, color: "#34a853" },
  { grow: 830, color: "#fbbc04" },
  { grow: 222, color: "#ff8c1a" },
];
const legend = [
  { label: "Clear", color: "#34a853" },
  { label: "Rain Likely", color: "#fbbc04" },
  { label: "Storms", color: "#ff8c1a" },
  { label: "Severe", color: "#ff4d4d" },
];
const DRIVE = 258;

const yAt = (levels: number[], x: number) => {
  let i = 1;
  while (i < xs.length - 1 && xs[i] < x) i++;
  const a = levels[Math.floor((i - 1) / 2)];
  const b = levels[Math.floor(i / 2)];
  return a + ((b - a) * (x - xs[i - 1])) / (xs[i] - xs[i - 1]);
};

const Chart = ({ lane, at }: { lane: (typeof lanes)[number]; at: number }) => {
  const pts = xs.map((x, i) => `${x},${lane.levels[Math.floor(i / 2)]}`).join(" ");
  const cx = at * 1208;
  return (
    <Lane $bg={lane.bg}>
      <svg viewBox="0 0 1208 211" aria-hidden="true">
        <polygon points={`0,211 ${pts} 1208,211`} fill={lane.area} />
        <polyline points={pts} fill="none" stroke={lane.line} strokeWidth={4} />
        <circle cx={cx} cy={yAt(lane.levels, cx)} r={10.5} fill={lane.dot} stroke="#fff" strokeWidth={4} />
      </svg>
      <LaneLabel>{`${lane.name}  ${lane.value}`}</LaneLabel>
    </Lane>
  );
};

export default function App() {
  const [minutes, setMinutes] = useState(228);
  const at = minutes / DRIVE;
  return (
    <>
      <GlobalStyle />
      <Page>
        <StatusBar>
          <Clock>9:41</Clock>
          <Island />
          <StatusIcons>
            <svg width="64" height="42" viewBox="0 0 64 42" fill="#fff">
              <rect x="0" y="25" width="11" height="16" rx="3" />
              <rect x="17.500" y="18" width="11" height="23" rx="3" />
              <rect x="35" y="9" width="11" height="32" rx="3" />
              <rect x="52.500" y="0" width="11" height="41" rx="3" />
            </svg>
            <svg width="56" height="42" viewBox="0 0 56 42" fill="#fff">
              <path d="M28 0 C39 0 48.500 4.500 55.500 11.500 Q56.500 12.500 55.500 13.500 L51.500 17.500 Q50.500 18.500 49.500 17.500 C43.500 12 36 8.700 28 8.700 C20 8.700 12.500 12 6.500 17.500 Q5.500 18.500 4.500 17.500 L0.500 13.500 Q-0.500 12.500 0.500 11.500 C7.500 4.500 17 0 28 0Z" />
              <path d="M28 14 C35 14 41 16.700 46 21.300 Q47 22.300 46 23.300 L42 27.300 Q41 28.300 40 27.300 C36.700 24.300 32.500 22.600 28 22.600 C23.500 22.600 19.300 24.300 16 27.300 Q15 28.300 14 27.300 L10 23.300 Q9 22.300 10 21.300 C15 16.700 21 14 28 14Z" />
              <path d="M28 28 C31.500 28 34 29.200 36.200 31 Q37 32 36.200 33 L29 40.200 Q28 41.200 27 40.200 L19.800 33 Q19 32 19.800 31 C22 29.200 24.500 28 28 28Z" />
            </svg>
            <svg width="92" height="46" viewBox="0 0 92 46">
              <rect x="1.500" y="3" width="80" height="40" rx="13" fill="none" stroke="#6d757c" strokeWidth="3" />
              <path d="M86 16 C92 18 92 28 86 30Z" fill="#858c92" />
              <rect x="7" y="8.500" width="69" height="29" rx="8" fill="#35c759" />
              <path d="M49 2 L27.500 25 Q26.500 27 29 27 L39.500 27 L35.500 43 Q36 46 38.500 43.500 L56 21.500 Q57 19.500 54.500 19.500 L45.500 19.500 L50 4 Q50.500 1 49 2Z" fill="#858c92" stroke="#0b1a26" strokeWidth="6" paintOrder="stroke" strokeLinejoin="round" />
            </svg>
          </StatusIcons>
        </StatusBar>

        <Sheet>
          <Handle />
          <TitleRow>
            <MdThunderstorm size={60} color="#42a5f5" />
            <Title>Weather Timeline — Day 1 — Wed, May 27</Title>
            <CloseButton type="button" aria-label="Close"><MdClose size={58} /></CloseButton>
          </TitleRow>

          <RouteMap />

          <Banner>
            <MdFlashOn size={82} color="#ff8c1a" />
            <BannerText>
              <Condition>Thunderstorms</Condition>
              <Details>25°C · 51% precip · 14 km/h wind</Details>
            </BannerText>
            <BannerTime>5:48 PM</BannerTime>
          </Banner>

          <Timeline>
            <Strip>
              {segments.map((s) => <Segment key={s.color} $grow={s.grow} $color={s.color} />)}
              <Cursor style={{ left: `${at * 100}%` }} />
            </Strip>
            {lanes.map((l) => <Chart key={l.name} lane={l} at={at} />)}
            <SliderBox>
              <Played style={{ width: `${at * 100}%` }} />
              <Remaining />
              <Range type="range" aria-label="Time along the drive" min={0} max={DRIVE} value={minutes} onChange={(e) => setMinutes(Number(e.target.value))} />
            </SliderBox>
            <Times>
              <span>2:00 PM</span>
              <em>4h 18m drive</em>
              <span>6:18 PM</span>
            </Times>
            <Legend>
              {legend.map((l) => (
                <LegendItem key={l.label}><Dot $color={l.color} />{l.label}</LegendItem>
              ))}
            </Legend>
          </Timeline>
        </Sheet>
      </Page>
    </>
  );
}
